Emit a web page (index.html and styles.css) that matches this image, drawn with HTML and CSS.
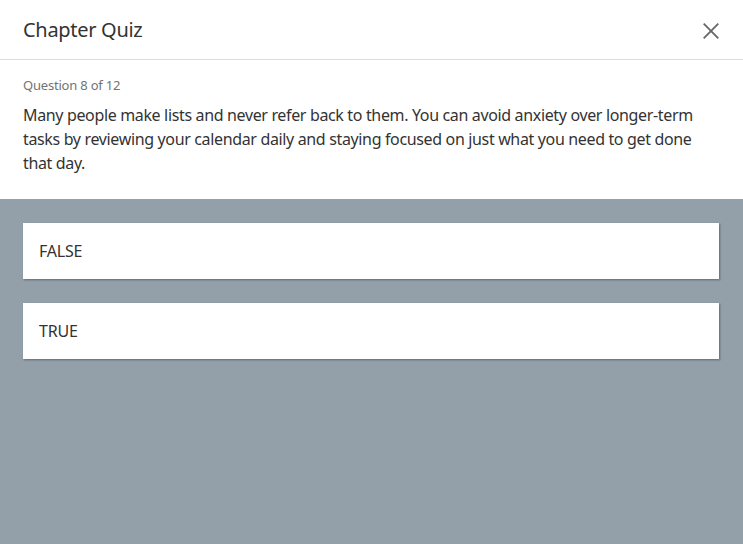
FILE: index.html
```html
<!DOCTYPE html>
<html lang="en">
<head>
<meta charset="utf-8">
<title>Chapter Quiz</title>
<link rel="stylesheet" href="styles.css">
</head>
<body>
<div class="quiz">
  <header class="quiz-header">
    <h1 class="quiz-title">Chapter Quiz</h1>
    <button class="close-btn" aria-label="Close">
      <svg width="16" height="16" viewBox="0 0 16 16"><path d="M0.7 0.7L15.3 15.3M15.3 0.7L0.7 15.3" stroke="#666" stroke-width="1.8" fill="none"/></svg>
    </button>
  </header>
  <section class="question">
    <div class="question-count">Question 8 of 12</div>
    <p class="question-text">Many people make lists and never refer back to them. You can avoid anxiety over longer-term tasks by reviewing your calendar daily and staying focused on just what you need to get done that day.</p>
  </section>
  <section class="answers">
    <button class="answer">FALSE</button>
    <button class="answer">TRUE</button>
  </section>
</div>
</body>
</html>
```
FILE: styles.css
```css
html, body {
  margin: 0;
  padding: 0;
  height: 100%;
}
body {
  font-family: "Noto Sans", "Open Sans", sans-serif;
  color: #333;
  background: #93a0aa;
}
.quiz {
  display: flex;
  flex-direction: column;
  min-height: 100%;
}
.quiz-header {
  background: #fff;
  height: 59px;
  border-bottom: 1px solid #dcdcdc;
  display: flex;
  align-items: center;
  justify-content: space-between;
  padding: 0 24px 0 23px;
}
.quiz-title {
  margin: 0;
  font-size: 20px;
  font-weight: 400;
  letter-spacing: -0.3px;
  color: #333;
}
.close-btn {
  background: none;
  border: 0;
  padding: 0;
  width: 16px;
  height: 16px;
  display: flex;
  margin-top: 2px;
}
.question {
  background: #fff;
  padding: 16px 24px 24px 23px;
}
.question-count {
  font-size: 13px;
  line-height: 18px;
  color: #737373;
  letter-spacing: -0.2px;
}
.question-text {
  margin: 9px 0 0;
  font-size: 16px;
  line-height: 24px;
  letter-spacing: -0.35px;
}
.answers {
  display: flex;
  flex-direction: column;
  gap: 24px;
  padding: 24px 24px 24px 23px;
}
.answer {
  height: 56px;
  background: #fff;
  border: 0;
  box-shadow: 1px 1px 2px rgba(0,0,0,0.35);
  text-align: left;
  padding: 0 16px;
  font-family: inherit;
  font-size: 16px;
  letter-spacing: -0.2px;
  color: #333;
}
```
